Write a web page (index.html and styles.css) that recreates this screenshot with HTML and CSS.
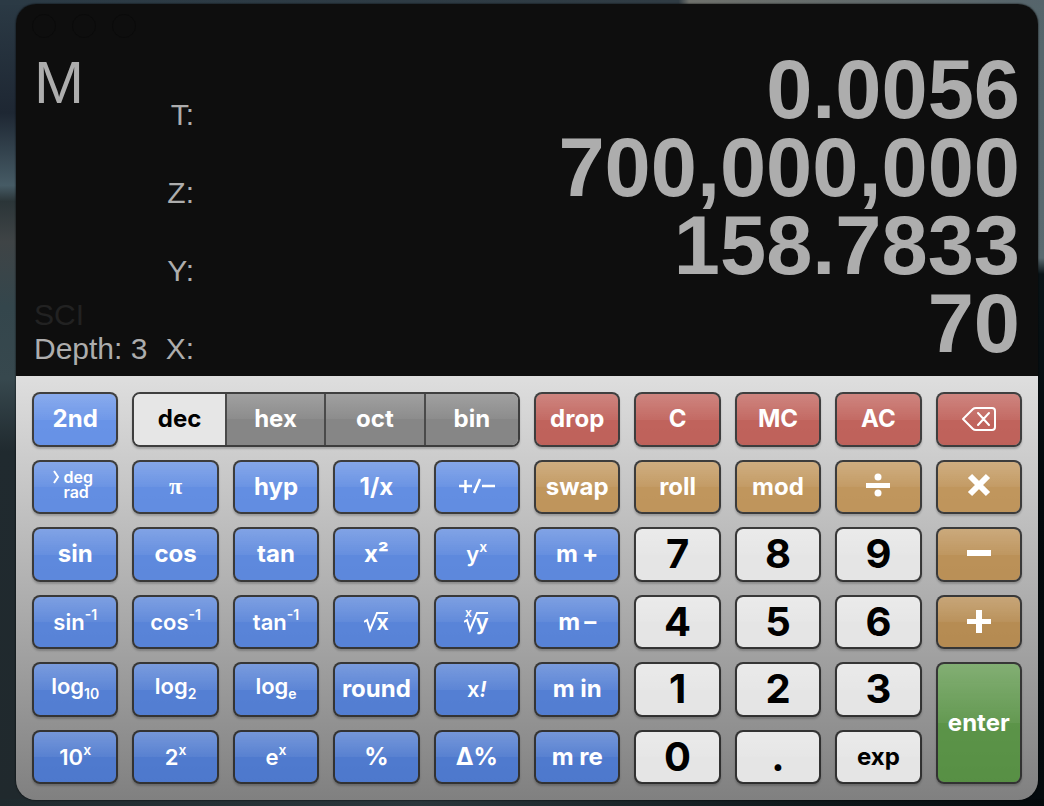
FILE: index.html
```html
<!DOCTYPE html>
<html lang="en">
<head>
<meta charset="utf-8">
<title>RPN Calculator</title>
<link rel="stylesheet" href="styles.css">
</head>
<body>
<main class="calculator">
  <section class="display" aria-label="Stack">
    <div class="lights" aria-hidden="true"><i></i><i></i><i></i></div>
    <div class="status">
      <span class="memory">M</span>
      <span class="mode">SCI</span>
      <span class="depth">Depth: 3</span>
    </div>
    <dl class="stack">
      <div class="register"><dt>T:</dt><dd>0.0056</dd></div>
      <div class="register"><dt>Z:</dt><dd>700,000,000</dd></div>
      <div class="register"><dt>Y:</dt><dd>158.7833</dd></div>
      <div class="register"><dt>X:</dt><dd>70</dd></div>
    </dl>
  </section>
  <section class="keypad" aria-label="Keys">
    <button class="key blue">2nd</button>
    <div class="bases" role="group" aria-label="Number base">
      <button class="base active" aria-pressed="true">dec</button>
      <button class="base">hex</button>
      <button class="base">oct</button>
      <button class="base">bin</button>
    </div>
    <button class="key red">drop</button>
    <button class="key red">C</button>
    <button class="key red">MC</button>
    <button class="key red">AC</button>
    <button class="key red" aria-label="Backspace"><svg width="36" height="26" viewBox="0 0 36 26" fill="none" stroke="#fff" stroke-width="2" stroke-linecap="round" stroke-linejoin="round"><path d="M2 13 12 3Q13 2 15 2H31Q34 2 34 5V21Q34 24 31 24H15Q13 24 12 23ZM17 7 28 19M28 7 17 19"/></svg></button>

    <button class="key blue"><span class="degrad"><svg width="7" height="14" viewBox="0 0 7 14" fill="none" stroke="#fff" stroke-width="2"><path d="M1 1 5 7 1 13"/></svg><span>deg<br>rad</span></span></button>
    <button class="key blue pi">π</button>
    <button class="key blue">hyp</button>
    <button class="key blue">1/x</button>
    <button class="key blue" aria-label="Change sign"><svg width="38" height="20" viewBox="0 0 38 20" fill="none" stroke="#fff" stroke-width="2.500"><path d="M1 9H14M7.500 3V16M16 16 22 2M24 9H37"/></svg></button>
    <button class="key tan">swap</button>
    <button class="key tan">roll</button>
    <button class="key tan">mod</button>
    <button class="key tan operator" aria-label="Divide"><svg width="26" height="26" viewBox="0 0 26 26" fill="#fff"><path d="M1 11H25V16H1Z"/><circle cx="13" cy="5" r="3.500"/><circle cx="13" cy="21" r="3.500"/></svg></button>
    <button class="key tan operator" aria-label="Multiply"><svg width="26" height="26" viewBox="0 0 26 26" fill="none" stroke="#fff" stroke-width="6"><path d="M4 4 22 22M22 4 4 22"/></svg></button>

    <button class="key blue">sin</button>
    <button class="key blue">cos</button>
    <button class="key blue">tan</button>
    <button class="key blue">x²</button>
    <button class="key blue math"><span>y<sup>x</sup></span></button>
    <button class="key blue">m<span class="sign">+</span></button>
    <button class="key digit">7</button>
    <button class="key digit">8</button>
    <button class="key digit">9</button>
    <button class="key tan" aria-label="Subtract"><svg width="26" height="26" viewBox="0 0 26 26" fill="#fff"><path d="M1 9H25V15H1Z"/></svg></button>

    <button class="key blue math"><span>sin<sup>-1</sup></span></button>
    <button class="key blue math"><span>cos<sup>-1</sup></span></button>
    <button class="key blue math"><span>tan<sup>-1</sup></span></button>
    <button class="key blue math root"><svg width="24" height="22" viewBox="0 0 24 22" fill="none" stroke="#fff" stroke-width="2"><path d="M0 11 3 9 6 19 13 2H24"/></svg><span>x</span></button>
    <button class="key blue math root"><small>x</small><svg width="24" height="22" viewBox="0 0 24 22" fill="none" stroke="#fff" stroke-width="2"><path d="M0 11 3 9 6 19 13 2H24"/></svg><span>y</span></button>
    <button class="key blue">m<span class="sign">–</span></button>
    <button class="key digit">4</button>
    <button class="key digit">5</button>
    <button class="key digit">6</button>
    <button class="key tan" aria-label="Add"><svg width="26" height="26" viewBox="0 0 26 26" fill="#fff"><path d="M1 10H10V1H16V10H25V15H16V24H10V15H1Z"/></svg></button>

    <button class="key blue math log"><span>log<sub>10</sub></span></button>
    <button class="key blue math log"><span>log<sub>2</sub></span></button>
    <button class="key blue math log"><span>log<sub>e</sub></span></button>
    <button class="key blue">round</button>
    <button class="key blue math"><span>x<em>!</em></span></button>
    <button class="key blue">m in</button>
    <button class="key digit">1</button>
    <button class="key digit">2</button>
    <button class="key digit">3</button>
    <button class="key green">enter</button>

    <button class="key blue math"><span>10<sup>x</sup></span></button>
    <button class="key blue math"><span>2<sup>x</sup></span></button>
    <button class="key blue math"><span>e<sup>x</sup></span></button>
    <button class="key blue">%</button>
    <button class="key blue">Δ%</button>
    <button class="key blue">m re</button>
    <button class="key digit">0</button>
    <button class="key digit">.</button>
    <button class="key digit word">exp</button>
  </section>
</main>
</body>
</html>
```
FILE: styles.css
```css
* { box-sizing: border-box; }

body {
  margin: 0;
  min-height: 100vh;
  display: flex;
  padding: 4px 6px 6px 16px;
  font-family: Inter, "Liberation Sans", sans-serif;
  background:
    linear-gradient(90deg, #2b3a45, #303c44 65%, #6f716c 66%, #55646b) top / 100% 5px no-repeat,
    linear-gradient(90deg, #1f2a2e, #2a363b 40%, #10191c 75%, #04090c) bottom / 100% 7px no-repeat,
    linear-gradient(#55656b, #5a6a70 32%, #0a1418 34%, #03090c 60%, #050b0e) right / 40px 100% no-repeat,
    linear-gradient(#2b3a45, #1e2733 14%, #465b65 23%, #2b3538 25%, #3f4446 30%, #34464c 38%, #37484e 47%, #202a2f 56%, #20292d) #20292d;
}

.calculator {
  flex: 1;
  display: flex;
  flex-direction: column;
  border-radius: 20px;
  overflow: hidden;
  box-shadow: 0 0 2px #000;
}

.display {
  position: relative;
  display: flex;
  padding: 50px 18px 10px;
  background: #0e0e0e;
  color: #adadad;
  font-family: "Liberation Sans", Arial, sans-serif;
  font-size: 30px;
  line-height: 34px;
}

.lights {
  position: absolute;
  top: 10px;
  left: 16px;
  display: flex;
  gap: 16px;
}
.lights i {
  width: 24px;
  height: 24px;
  border: 1px solid #0b0b0b;
  border-radius: 50%;
}

.status {
  width: 124px;
  display: flex;
  flex-direction: column;
}
.memory { font-size: 60px; line-height: 58px; }
.mode { margin-top: auto; color: #222; }
.depth { white-space: nowrap; }

.stack { flex: 1; margin: 0; }
.register {
  height: 78px;
  display: flex;
  justify-content: space-between;
}
.register dt {
  width: 36px;
  align-self: flex-end;
  text-align: right;
}
.register dd {
  margin: 0;
  font-size: 83px;
  font-weight: 700;
  line-height: 72px;
}

.keypad {
  flex: 1;
  display: grid;
  grid-template-columns: repeat(10, minmax(0, 1fr));
  grid-template-rows: repeat(6, minmax(54px, 1fr));
  gap: 13px 14px;
  padding: 16px;
  background: linear-gradient(#dedede, #b0b0b0 50%, #808080);
}

button {
  margin: 0;
  padding: 0;
  display: flex;
  align-items: center;
  justify-content: center;
  font: 700 24px/28px Inter, "Liberation Sans", sans-serif;
  color: #fff;
  white-space: nowrap;
}

.key, .bases {
  border: 2px solid rgba(35, 35, 35, 0.85);
  border-radius: 8px;
  box-shadow: 0 2px 2px rgba(0, 0, 0, 0.2);
  background-clip: padding-box;
}
.key {
  background-color: var(--tone);
  background-image: linear-gradient(rgba(255, 255, 255, 0.22), rgba(255, 255, 255, 0.05) 50%, transparent 50%);
  background-origin: border-box;
}
.blue { --tone: rgba(50, 115, 240, 0.67); }
.red { --tone: rgba(182, 43, 33, 0.67); }
.tan { --tone: rgba(190, 127, 42, 0.67); }
.green { --tone: rgba(66, 149, 37, 0.67); grid-row: span 2; }
.digit {
  --tone: #e5e5e5;
  color: #000;
  font-size: 40px;
}
.word { font-size: 24px; }

.bases {
  grid-column: span 4;
  display: grid;
  grid-template-columns: 91fr 100fr 100fr 95fr;
  overflow: hidden;
}
.base {
  border: 0;
  border-left: 2px solid #4a4a4a;
  background: linear-gradient(#a0a0a0, #8c8c8c 50%, #868686 50%);
}
.base.active {
  border-left: 0;
  background: #e6e6e6;
  color: #000;
}

.math { font-size: 22px; font-weight: 600; }
.math sup, .math sub { font-size: 14px; line-height: 0; }
.math sup { vertical-align: 10px; }
.math sub { vertical-align: -5px; }
.log { padding-bottom: 6px; }
.operator { padding-bottom: 3px; }
.sign { margin-left: 4px; }

.pi { font-family: "Liberation Serif", serif; padding-bottom: 2px; }

.degrad {
  display: flex;
  gap: 3px;
  padding: 0 4px 4px 0;
  font-size: 16px;
  font-weight: 600;
  line-height: 15px;
  text-align: left;
}

.root svg { margin-right: -12px; }
.root small { font-size: 12px; align-self: flex-start; margin: 2px -8px 0 0; }
```
